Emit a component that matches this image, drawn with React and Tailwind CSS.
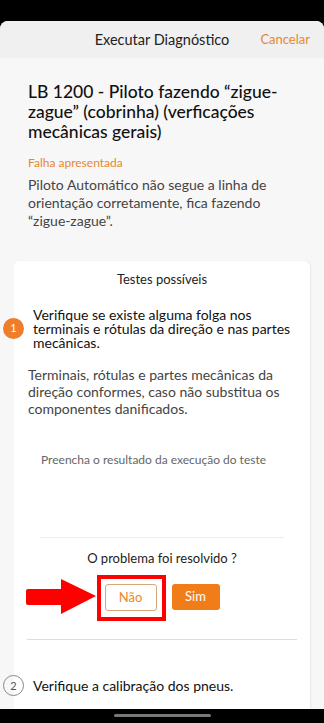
import React from "react";

export default function App() {
  return (
    <div className="w-[324px] h-[723px] bg-black flex flex-col overflow-hidden" style={{ fontFamily: "Lato, 'Noto Sans', sans-serif" }}>
      <div className="h-[21px] shrink-0" />
      <div className="flex-1 flex flex-col rounded-t-[8px] overflow-hidden bg-[#f7f7f7] min-h-0">
        <div className="h-[37px] shrink-0 bg-[#f0f0f0] flex items-center relative">
          <div className="absolute left-0 right-0 text-center text-[14.5px] text-[#222]">Executar Diagnóstico</div>
          <div className="ml-auto mr-[14px] text-[13px] text-[#e8872e] relative">Cancelar</div>
        </div>
        <div className="flex-1 flex flex-col min-h-0">
          <div className="px-[28px] pt-[24px]">
            <h1 className="text-[17.5px] leading-[20px] font-medium text-[#111]">LB 1200 - Piloto fazendo “zigue-zague” (cobrinha) (verficações mecânicas gerais)</h1>
            <div className="mt-[12px] text-[12px] text-[#e8872e]">Falha apresentada</div>
            <p className="mt-[4px] text-[14px] leading-[18px] text-[#444]">Piloto Automático não segue a linha de orientação corretamente, fica fazendo “zigue-zague”.</p>
          </div>
          <div className="mt-[31px] mx-[14px] flex-1 bg-white rounded-t-[6px] shadow-[1px_0_2px_rgba(0,0,0,0.06)] relative">
            <div className="pt-[9px] text-center text-[13px] text-[#222]">Testes possíveis</div>
            <div className="mt-[18px] flex items-center">
              <div className="w-[21px] h-[21px] rounded-full bg-[#ef7d2a] text-white text-[11px] flex items-center justify-center -ml-[11px] shrink-0">1</div>
              <div className="ml-[9px] text-[14px] leading-[14px] text-[#111]">Verifique se existe alguma folga nos terminais e rótulas da direção e nas partes mecânicas.</div>
            </div>
            <p className="mt-[16px] px-[14px] text-[14px] leading-[17px] text-[#444]">Terminais, rótulas e partes mecânicas da direção conformes, caso não substitua os componentes danificados.</p>
            <div className="mt-[34px] pl-[27px] text-[12px] text-[#666]">Preencha o resultado da execução do teste</div>
            <div className="mt-[68px] mx-[26px] border-t border-[#eee]" />
            <div className="mt-[11px] text-center text-[13px] text-[#222]">O problema foi resolvido ?</div>
            <div className="mt-[16px] flex justify-center gap-[15px] relative">
              <div className="relative">
                <button className="w-[52px] h-[27px] rounded-[3px] border border-[#d6a77a] text-[13px] text-[#e8872e] bg-white">Não</button>
                <div className="absolute -left-[8px] -top-[9px] w-[69px] h-[46px] border-[4px] border-[#ff0000]" />
                <svg className="absolute -left-[79px] -top-[6px]" width="71" height="37" viewBox="0 0 71 37">
                  <path d="M2 11 H35 V1 L70 18 L35 36 V27 H2 Q0 27 0 25 V13 Q0 11 2 11 Z" fill="#ff0000" />
                </svg>
              </div>
              <button className="w-[48px] h-[26px] rounded-[3px] bg-[#f07d1a] text-[13px] text-white">Sim</button>
            </div>
            <div className="mt-[28px] mx-[13px] border-t border-[#ddd]" />
            <div className="mt-[35px] flex items-center">
              <div className="w-[21px] h-[21px] rounded-full border border-[#888] text-[#555] text-[11px] flex items-center justify-center -ml-[11px] shrink-0">2</div>
              <div className="ml-[9px] text-[14px] text-[#111]">Verifique a calibração dos pneus.</div>
            </div>
          </div>
        </div>
      </div>
      <div className="h-[14px] shrink-0 bg-black flex justify-center pt-[5px]">
        <div className="w-[97px] h-[3px] rounded-full bg-[#777]" />
      </div>
    </div>
  );
}
